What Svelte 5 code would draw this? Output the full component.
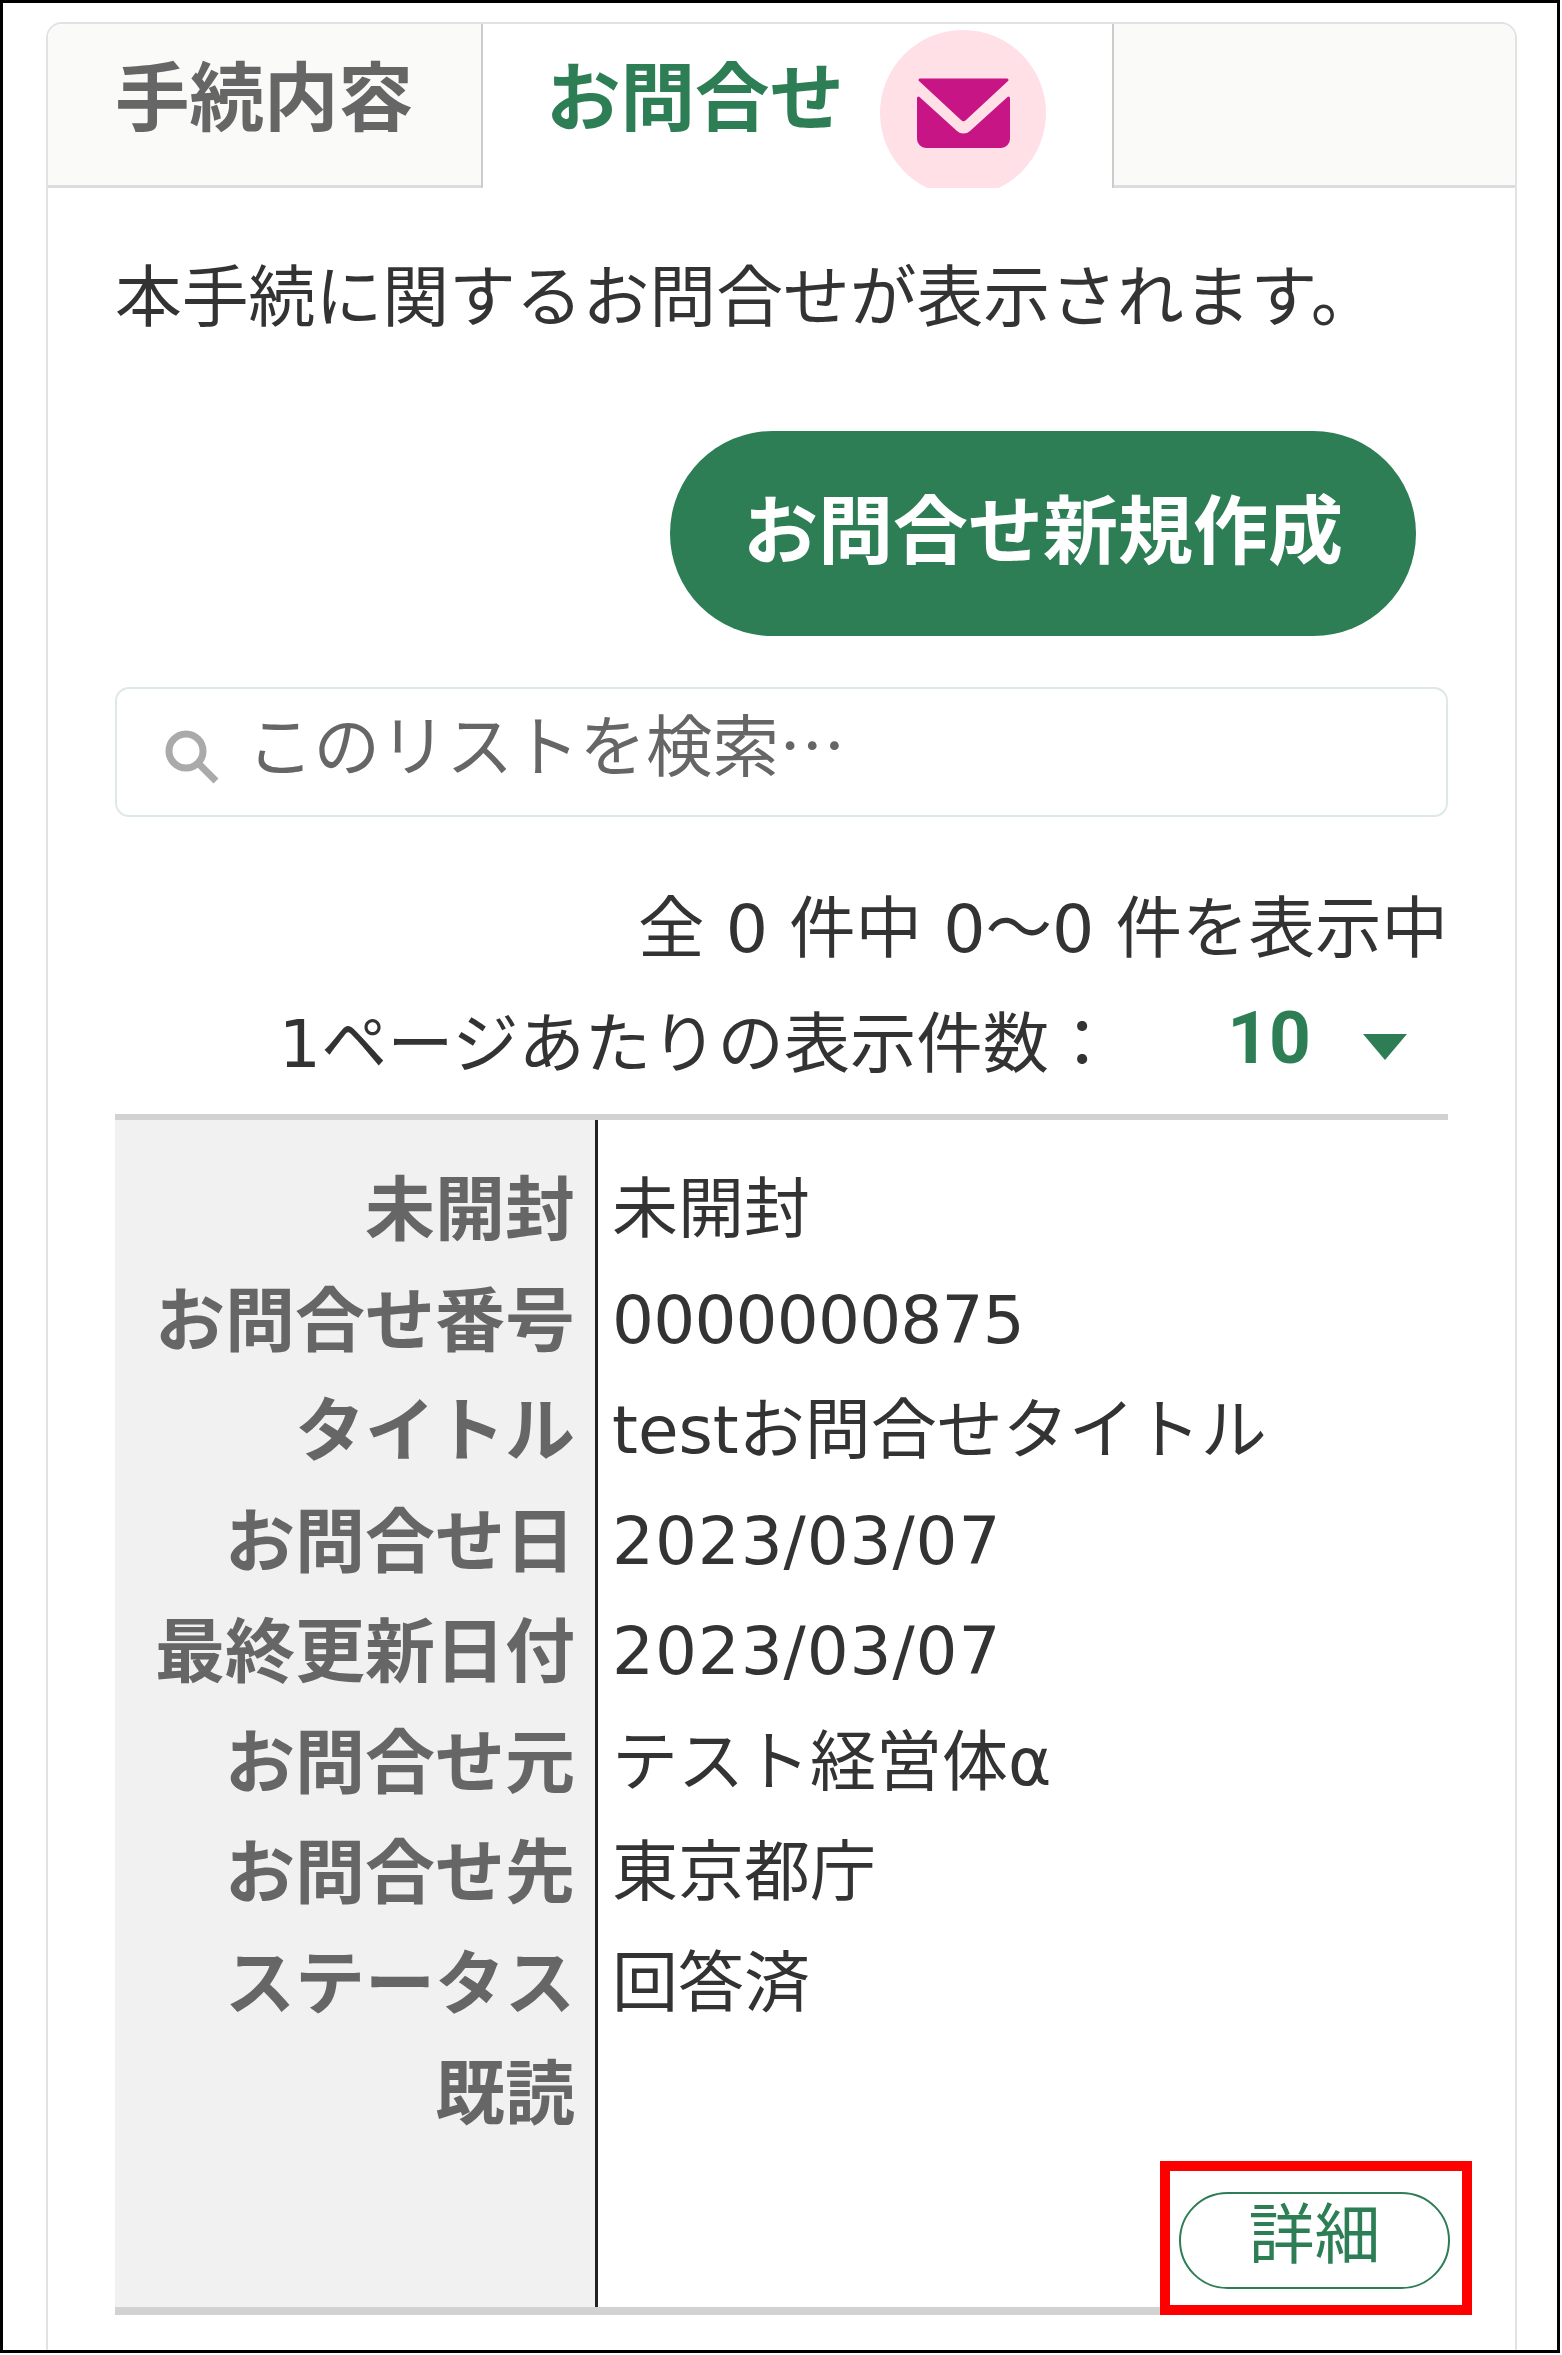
<script>
	const rows = [
		{ label: "未開封", value: "未開封" },
		{ label: "お問合せ番号", value: "0000000875", fit: "tight" },
		{ label: "タイトル", value: "testお問合せタイトル" },
		{ label: "お問合せ日", value: "2023/03/07", fit: "wide" },
		{ label: "最終更新日付", value: "2023/03/07", fit: "wide" },
		{ label: "お問合せ元", value: "テスト経営体α" },
		{ label: "お問合せ先", value: "東京都庁" },
		{ label: "ステータス", value: "回答済" },
		{ label: "既読", value: "" },
	];
</script>

<div class="frame">
	<div class="card">
		<div class="tabs">
			<div class="tab first">手続内容</div>
			<div class="tab active">
				<span class="tab-label">お問合せ</span>
				<span class="badge">
					<svg width="93" height="70" viewBox="0 0 93 70">
						<path d="M3 0.5H90a1.5 1.5 0 0 1 1 2.6L49 42a3.6 3.6 0 0 1-5 0L2 3.1A1.5 1.5 0 0 1 3 0.5Z" fill="#c71585" />
						<path d="M0 20a1.5 1.5 0 0 1 2.5-1L40 53a9.5 9.5 0 0 0 13 0L90.500 19a1.500 1.500 0 0 1 2.500 1V61a9 9 0 0 1-9 9H9a9 9 0 0 1-9-9Z" fill="#c71585" />
					</svg>
				</span>
			</div>
			<div class="tab rest"></div>
		</div>
		<div class="body">
			<p class="intro">本手続に関するお問合せが表示されます。</p>
			<div class="actions">
				<button class="create">お問合せ新規作成</button>
			</div>
			<div class="search">
				<svg width="54" height="54" viewBox="0 0 54 54">
					<circle cx="21" cy="21" r="17" fill="none" stroke="#aaa" stroke-width="7" />
					<path d="M33 33L51 51" stroke="#aaa" stroke-width="7" fill="none" />
				</svg>
				<span class="placeholder">このリストを検索…</span>
			</div>
			<p class="count">全 0 件中 0～0 件を表示中</p>
			<div class="per-page">
				<span>1ページあたりの表示件数：</span>
				<span class="per-value">10</span>
				<span class="arrow"></span>
			</div>
			<div class="record">
				<div class="labels">
					{#each rows as row}
						<div class="label">{row.label}</div>
					{/each}
				</div>
				<div class="values">
					{#each rows as row}
						<div class="value {row.fit || ''}">{row.value}</div>
					{/each}
					<div class="detail-row">
						<button class="detail">詳細</button>
					</div>
				</div>
				<div class="highlight"></div>
			</div>
		</div>
	</div>
</div>

<style>
	:global(body) {
		margin: 0;
		background: #fff;
	}
	.frame {
		width: 1560px;
		height: 2353px;
		box-sizing: border-box;
		border: 3px solid #000;
		padding: 19px 40px 0 43px;
		overflow: hidden;
		background: #fff;
		font-family: "DejaVu Sans", "Noto Sans CJK JP", sans-serif;
		color: #333;
	}
	.card {
		height: 2400px;
		box-sizing: border-box;
		border: 2px solid #e2e2e2;
		border-radius: 16px 16px 0 0;
		overflow: hidden;
	}
	.tabs {
		display: flex;
		height: 164px;
	}
	.tab {
		box-sizing: border-box;
		font-family: "Noto Sans CJK JP", sans-serif;
		font-weight: 700;
		font-size: 74.500px;
		line-height: 1;
	}
	.first {
		width: 433px;
		background: #fafaf8;
		border-bottom: 3px solid #dcdcdc;
		color: #666;
		padding: 32px 0 0 67px;
	}
	.active {
		width: 633px;
		display: flex;
		border-left: 2px solid #ccc;
		border-right: 2px solid #ccc;
		overflow: hidden;
		color: #2d7d55;
		padding: 6px 0 0 63px;
	}
	.tab-label {
		width: 334px;
		padding-top: 26px;
		flex: none;
	}
	.badge {
		width: 166px;
		height: 166px;
		flex: none;
		display: flex;
		align-items: center;
		justify-content: center;
		border-radius: 50%;
		background: #ffe0e6;
	}
	.rest {
		flex: 1;
		background: #fafaf8;
		border-bottom: 3px solid #dcdcdc;
	}
	.body {
		padding: 0 67px 0 67px;
	}
	.intro {
		margin: 0;
		padding-top: 68px;
		font-family: "Noto Sans CJK JP", sans-serif;
		font-size: 66.800px;
		line-height: 72px;
	}
	.actions {
		display: flex;
		justify-content: flex-end;
		margin-top: 103px;
		padding-right: 32px;
	}
	.create {
		width: 746px;
		height: 205px;
		border: none;
		border-radius: 103px;
		background: #2d7d55;
		color: #fff;
		font-family: "Noto Sans CJK JP", sans-serif;
		font-weight: 700;
		font-size: 75px;
		padding: 0 0 16px;
	}
	.search {
		margin-top: 51px;
		height: 130px;
		box-sizing: border-box;
		border: 2px solid #dde9e4;
		border-radius: 14px;
		display: flex;
		align-items: center;
		padding-left: 48px;
		gap: 28px;
	}
	.search svg {
		flex: none;
		margin-top: 10px;
	}
	.placeholder {
		font-family: "Noto Sans CJK JP", sans-serif;
		font-size: 66.500px;
		line-height: 1;
		color: #666;
		margin-top: -20px;
	}
	.count {
		margin: 72px 0 0;
		text-align: right;
		font-size: 66.500px;
		line-height: 80px;
	}
	.per-page {
		display: flex;
		align-items: center;
		justify-content: flex-end;
		height: 80px;
		margin-top: 29px;
		font-size: 66.300px;
		padding-right: 41px;
	}
	.per-value {
		color: #2d7d55;
		font-weight: 700;
		font-family: "Roboto", sans-serif;
		font-size: 73px;
		margin-left: 112px;
		margin-right: 52px;
	}
	.arrow {
		width: 0;
		height: 0;
		border-left: 22px solid transparent;
		border-right: 22px solid transparent;
		border-top: 26px solid #2d7d55;
		margin-top: 18px;
	}
	.record {
		position: relative;
		display: grid;
		grid-template-columns: 483px 1fr;
		margin-top: 36px;
		border-top: 6px solid #d2d2d2;
		border-bottom: 8px solid #d2d2d2;
	}
	.labels {
		box-sizing: border-box;
		background: #f1f1f1;
		border-right: 3px solid #222;
		padding: 30px 20px 0 0;
	}
	.label {
		height: 110.500px;
		line-height: 110px;
		text-align: right;
		font-family: "Noto Sans CJK JP", sans-serif;
		font-weight: 700;
		font-size: 70px;
		color: #666;
	}
	.values {
		padding: 35px 0 0 14px;
	}
	.value {
		height: 110.500px;
		line-height: 110px;
		font-size: 66px;
	}
	.tight {
		letter-spacing: -0.800px;
	}
	.wide {
		letter-spacing: 0.900px;
	}
	.detail-row {
		display: flex;
		justify-content: flex-end;
		margin: 42px -2px 18px 0;
	}
	.detail {
		width: 271px;
		height: 97px;
		box-sizing: border-box;
		border: 2px solid #2d7d55;
		border-radius: 49px;
		background: #fff;
		color: #2d7d55;
		font-family: "Noto Sans CJK JP", sans-serif;
		font-size: 66px;
		line-height: 1;
		padding: 0 0 22px;
	}
	.highlight {
		position: absolute;
		right: -24px;
		bottom: -8px;
		width: 312px;
		height: 154px;
		box-sizing: border-box;
		border: 10px solid #f00;
	}
</style>
